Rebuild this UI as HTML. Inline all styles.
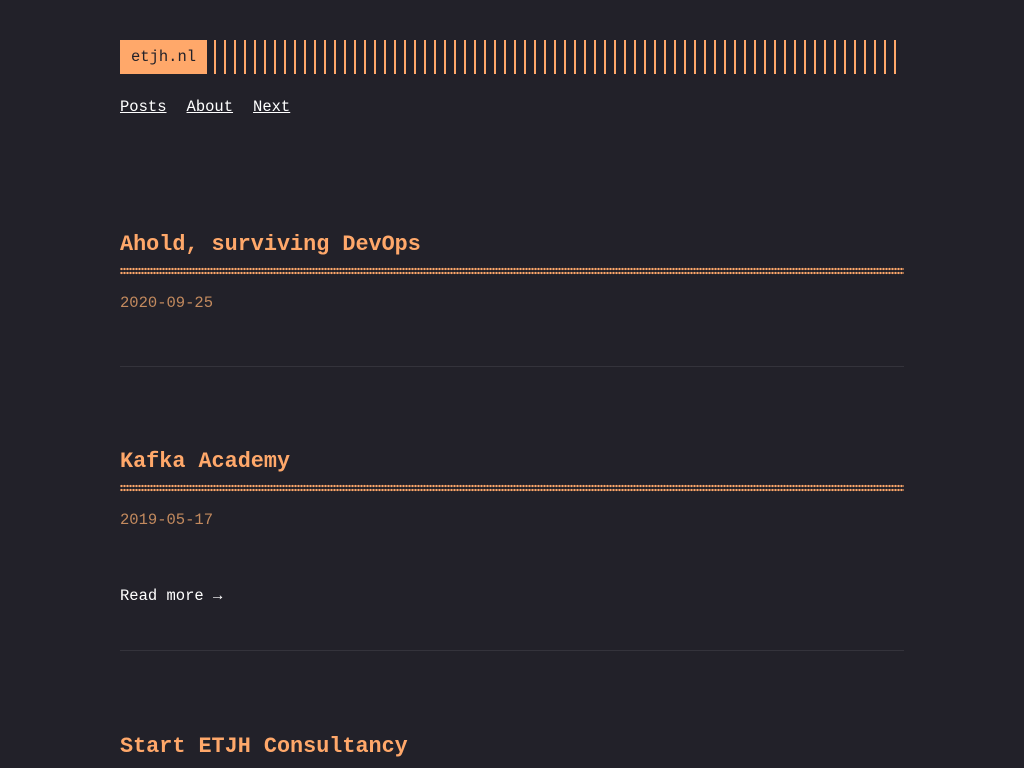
<!DOCTYPE html>
<html><head><meta charset="utf-8"><style>
html,body{margin:0;background:#222129;}
body{font-family:"Liberation Mono",monospace;font-size:15.5px;color:#fff;width:1024px;height:768px;overflow:hidden;position:relative}
.logo{position:absolute;left:120px;top:40px;width:87px;height:34px;background:#ffa86a;color:#222129;line-height:34px;text-align:center;font-size:15.5px}
.bars{position:absolute;left:214px;top:40px;width:686px;height:34px;background:repeating-linear-gradient(90deg,#ffa86a 0 2px,transparent 2px 10px)}
.nav{position:absolute;top:98px;left:120px}
.nav a{color:#fff;text-decoration:underline;margin-right:20px}
.post{position:absolute;left:120px;width:784px}
h2{margin:0;color:#ffa86a;font-size:21.8px;font-weight:bold;line-height:30px}
.dots{height:8px;margin-top:7px;background-image:radial-gradient(circle,#ffa86a 1.1px,transparent 1.3px);background-size:3px 4px;}
.date{color:#c38a5e;margin-top:19px}
.rm{color:#fff;margin-top:58px}
hr{position:absolute;left:120px;width:784px;border:0;border-top:1px solid #34333b;margin:0}
</style></head><body>
<div class="logo">etjh.nl</div><div class="bars"></div>
<div class="nav"><a>Posts</a><a>About</a><a>Next</a></div>
<div class="post" style="top:230px"><h2>Ahold, surviving DevOps</h2><div class="dots"></div><div class="date">2020-09-25</div></div>
<hr style="top:366px">
<div class="post" style="top:447px"><h2>Kafka Academy</h2><div class="dots"></div><div class="date">2019-05-17</div><div class="rm">Read more →</div></div>
<hr style="top:650px">
<div class="post" style="top:732px"><h2>Start ETJH Consultancy</h2></div>
</body></html>
